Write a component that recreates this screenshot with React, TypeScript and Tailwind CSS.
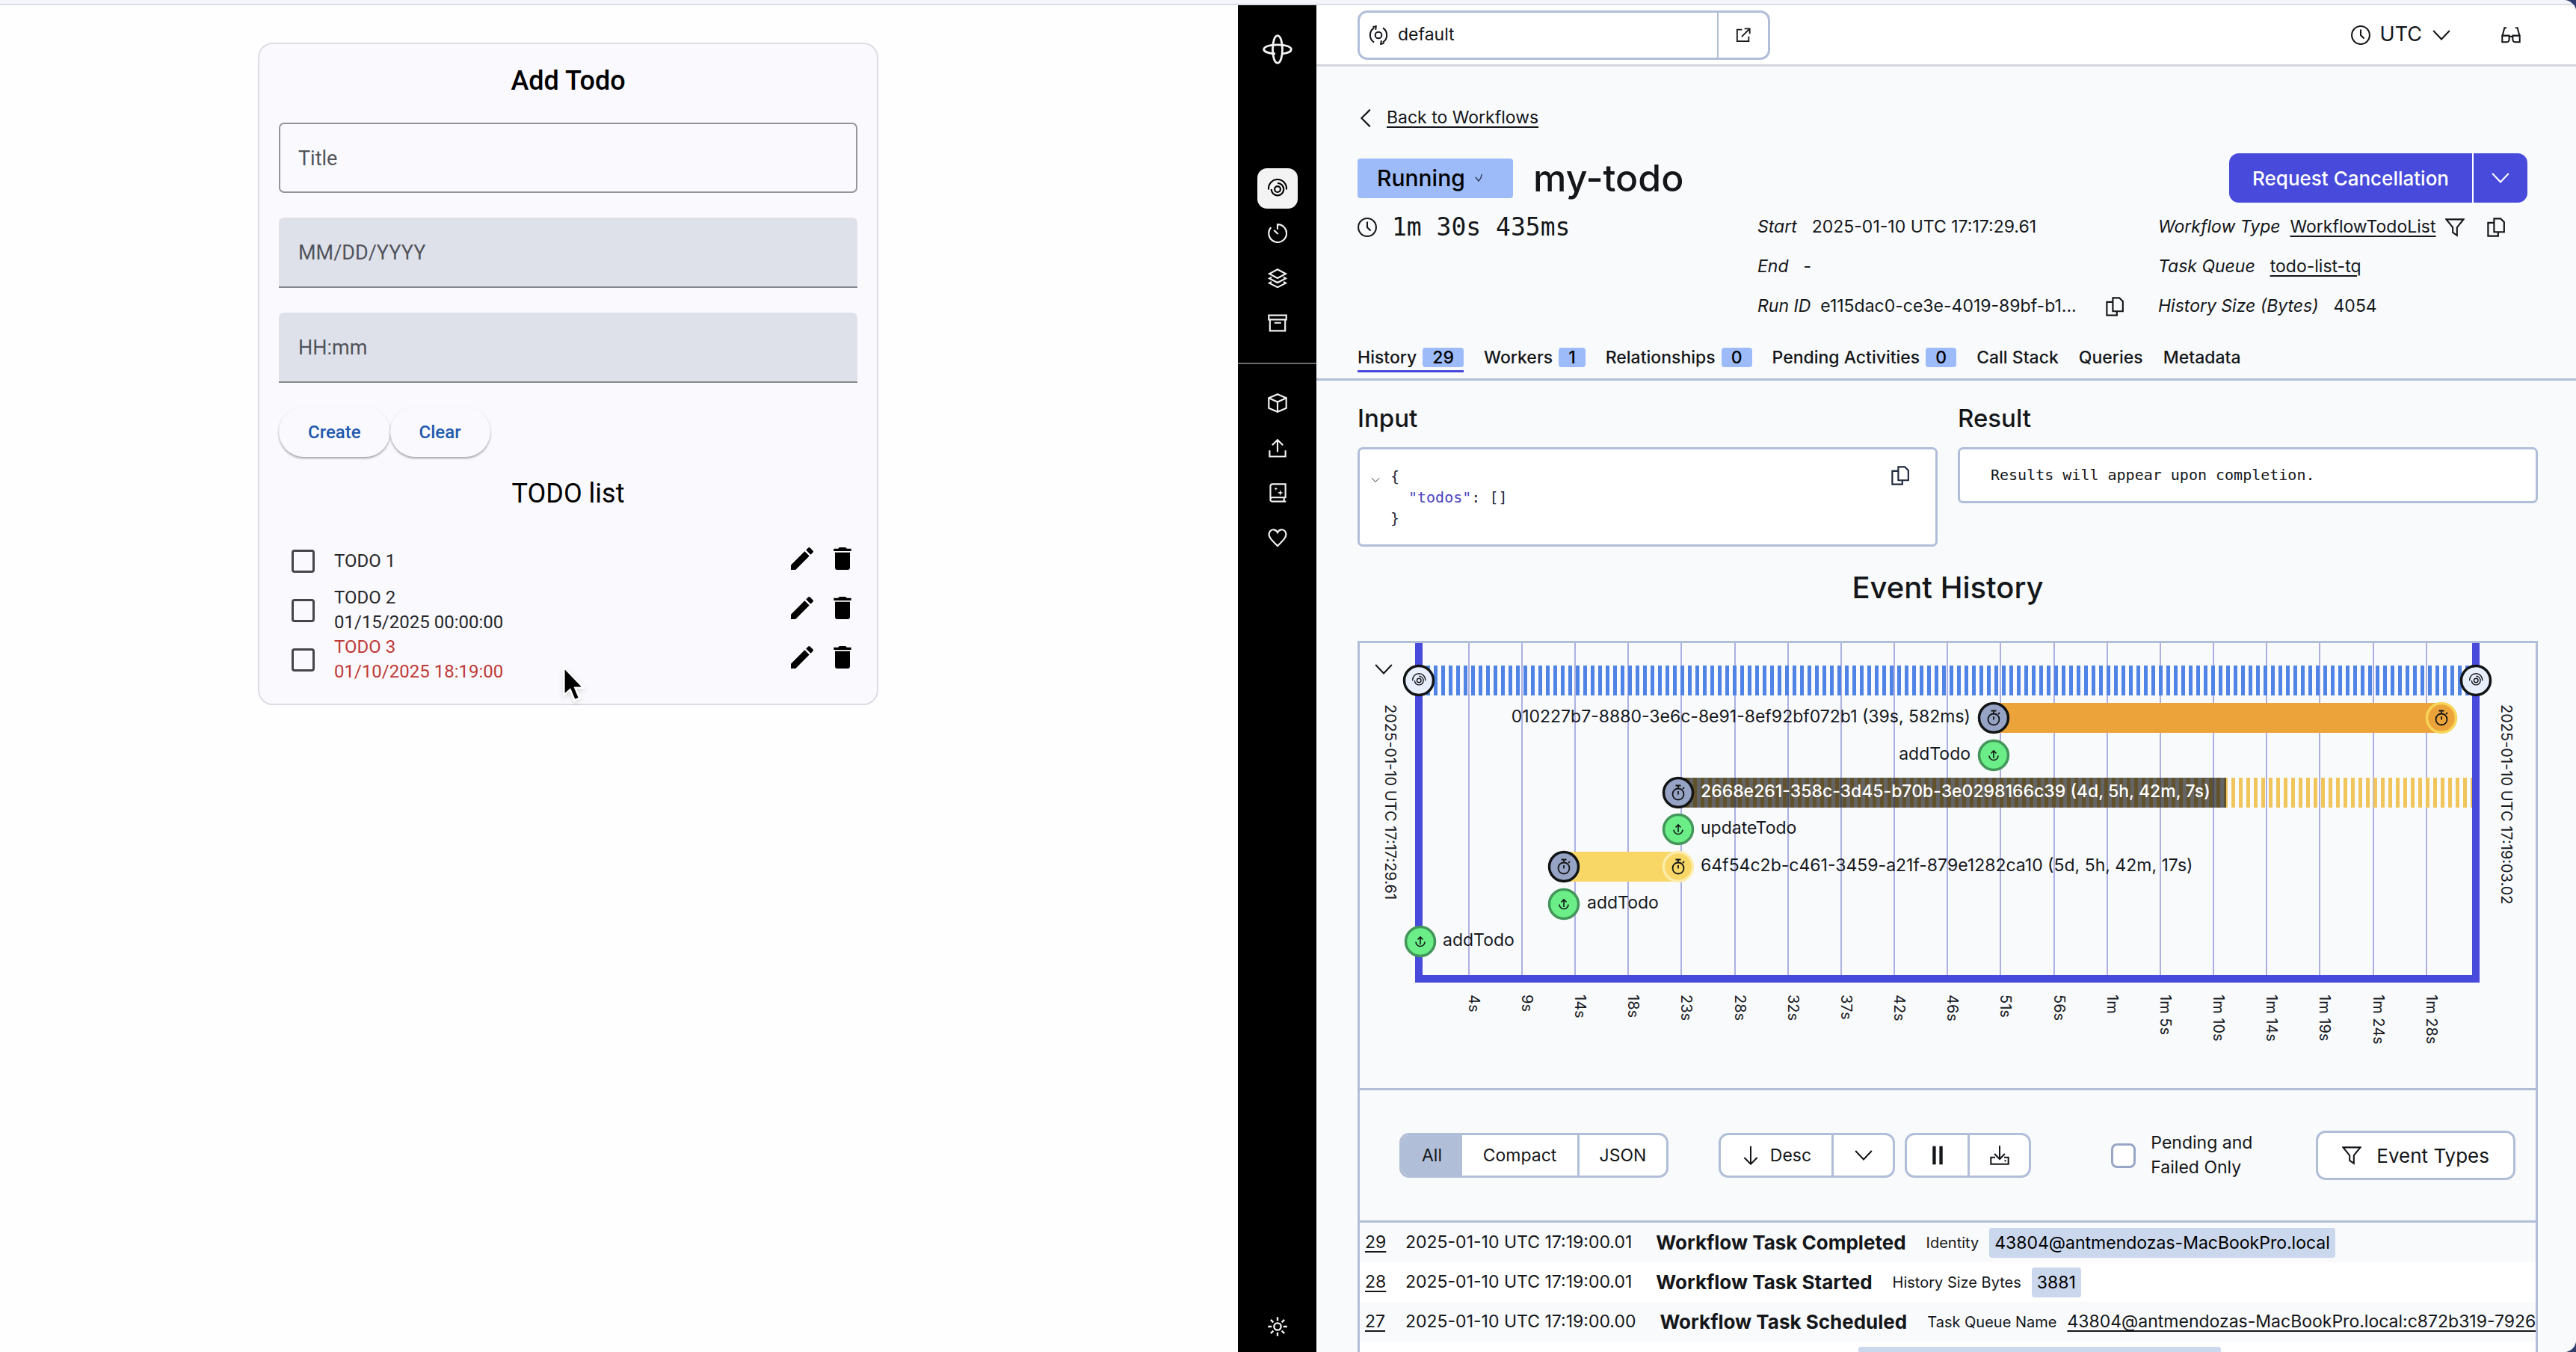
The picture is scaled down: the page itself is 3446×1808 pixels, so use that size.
import React from "react";

type IconProps = { className?: string };

function Icon({ className = "size-[26px]", children, sw = 1.7 }: IconProps & { children: React.ReactNode; sw?: number }) {
  return (
    <svg viewBox="0 0 24 24" fill="none" stroke="currentColor" strokeWidth={sw} className={`shrink-0 ${className}`} aria-hidden="true">
      {children}
    </svg>
  );
}

function SpiralShape() {
  return (
    <>
      <circle cx="12" cy="13" r="3.6" />
      <path d="M4.4 13A7.6 7.6 0 1 0 12 5.4" />
      <path d="M.9 13.4V12A11.1 11.1 0 0 1 23.1 12v1.4" />
    </>
  );
}

const WorkflowIcon = (p: IconProps) => (
  <Icon {...p} sw={2}>
    <SpiralShape />
  </Icon>
);
const ScheduleIcon = (p: IconProps) => (
  <Icon {...p} sw={2}>
    <path d="M4 4.6A11 11 0 1 0 12 1v6.2M7.5 8l5.2 5" />
  </Icon>
);
const LayersIcon = (p: IconProps) => (
  <Icon {...p} sw={2}>
    <path d="M12 1.2 22 6.6 12 12 2 6.6z" />
    <path d="M4.6 10.8 1.8 12.3 12 17.6l10.2-5.3-2.8-1.5M4.6 16.6l-2.8 1.5L12 23.2l10.2-5.1-2.8-1.5" />
  </Icon>
);
const ArchiveIcon = (p: IconProps) => (
  <Icon {...p} sw={2}>
    <path d="M1.2 2.4h21.6v5.4H1.2zM2.6 7.8v13.8h18.8V7.8M8 11.8h8.4" />
  </Icon>
);
const CubeIcon = (p: IconProps) => (
  <Icon {...p} sw={2}>
    <path d="M12 1.2 22.8 5.8v12.4L12 22.8 1.2 18.2V5.8zM1.2 5.8 12 10.6l10.8-4.8M12 10.6v12.2" />
  </Icon>
);
const UploadIcon = (p: IconProps) => (
  <Icon {...p} sw={2}>
    <path d="M12 17V2M5.4 8.6 12 2l6.6 6.6M2.2 15v7.6h19.6V15" />
  </Icon>
);
const BookIcon = (p: IconProps) => (
  <Icon {...p} sw={2}>
    <path d="M3.2 20V3.6A2.6 2.6 0 0 1 5.8 1.2h16v16.600H5.6a2.500 2.500 0 0 0 0 5h16.800M20 18v4.800" />
    <path d="M15.400 8.400l.9 2.700 2.700.9-2.700.9-.9 2.700-.9-2.700-2.700-.9 2.700-.9zM10 4.800l.6 1.700 1.700.6-1.700.6-.6 1.700-.6-1.700-1.700-.6 1.700-.6z" fill="currentColor" stroke="none" />
  </Icon>
);
const HeartIcon = (p: IconProps) => (
  <Icon {...p} sw={2}>
    <path d="M12 5.600C10 1.600 5 1 2.800 4c-2.400 3.300-1.400 6.400.8 9.200 2.100 2.800 5.400 6 8.400 9 3-3 6.300-6.200 8.400-9 2.200-2.800 3.200-5.900.8-9.200C19 1 14 1.600 12 5.600z" />
  </Icon>
);
const SunIcon = (p: IconProps) => (
  <Icon {...p} sw={2.2}>
    <circle cx="12" cy="12" r="4.300" />
    <path d="M12 .2v4.600M12 19.200v4.600M.2 12h4.600M19.200 12h4.600M3.600 3.600l3.200 3.200M17.200 17.200l3.200 3.200M3.600 20.400l3.200-3.200M17.200 6.800l3.200-3.200" />
  </Icon>
);
const LogoIcon = () => (
  <Icon className="size-10" sw={1.700}>
    <path d="M12 1c2.400 0 3.900 5.200 3.900 11s-1.500 11-3.900 11-3.900-5.200-3.900-11S9.600 1 12 1z" />
    <path d="M10.200 15.500C4.800 15.200 1 13.800 1 12s3.800-3.700 11-3.700S23 10.200 23 12s-3.200 3.100-7.200 3.500" />
  </Icon>
);
const ChevronDown = ({ className = "size-[26px]" }: IconProps) => (
  <Icon className={className} sw={1.900}>
    <path d="M2 6.500 12 17 22 6.500" />
  </Icon>
);
const ChevronLeft = () => (
  <Icon className="size-[26px]" sw={2}>
    <path d="M15.500 1.500 5 12l10.500 10.500" />
  </Icon>
);
const ClockIcon = () => (
  <Icon sw={1.900}>
    <circle cx="12" cy="12" r="11" />
    <path d="M12 5v7l4.200 4.200" />
  </Icon>
);
const GlassesIcon = () => (
  <Icon sw={1.900}>
    <path d="M6.500 3H4L1.400 13M17.500 3H20l2.600 10M1.200 12.600h8.600v5a3 3 0 0 1-3 3H1.200zM22.800 12.600h-8.600v5a3 3 0 0 0 3 3h5.600zM9.800 14.500c1.200-1 3.200-1 4.400 0" />
  </Icon>
);
const CopyIcon = () => (
  <Icon sw={2}>
    <path d="M9.600 1.200h8L22 5.600v12.200H9.600zM9.600 6.400H2.200v16.400h12.400v-5" />
  </Icon>
);
const FilterIcon = () => (
  <Icon sw={1.900}>
    <path d="M1.400 2.200h21.200L14.600 12v10l-5.200-3.600V12z" />
  </Icon>
);
const ArrowDownIcon = () => (
  <Icon sw={1.900}>
    <path d="M12 .8v21.600M4 14.800l8 8 8-8" />
  </Icon>
);
const PauseIcon = () => (
  <Icon sw={4}>
    <path d="M7.800.6v22.800M16.200.6v22.800" />
  </Icon>
);
const DownloadIcon = () => (
  <Icon sw={1.900}>
    <path d="M12 0v16.500M5.600 10.200l6.400 6.400 6.400-6.400M6.500 14.500H1.200v8.300h21.600v-8.300h-5.300M18 18.700h2" />
  </Icon>
);
const ExternalIcon = () => (
  <Icon className="size-5" sw={2.200}>
    <path d="M10 3.200H2.200v18.600h18.600V14M14 1.600h8.400V10M22 2 9.500 14.500" />
  </Icon>
);
const NamespaceIcon = () => (
  <Icon sw={1.900}>
    <circle cx="12" cy="12" r="4" />
    <path d="M6.500 20.800A10.500 10.500 0 0 1 6.500 3.200M17.500 3.200a10.500 10.500 0 0 1 0 17.600M5 2l4-1-.500 4.500M19 22l-4 1 .500-4.500" />
  </Icon>
);

/* ---------- Todo application ---------- */

const todos = [
  { title: "TODO 1", due: "", late: false },
  { title: "TODO 2", due: "01/15/2025 00:00:00", late: false },
  { title: "TODO 3", due: "01/10/2025 18:19:00", late: true },
];

function TodoApp() {
  return (
    <section className="relative min-w-0 bg-[#fefeff] pl-[345px] pr-8 pt-[50px] font-['Roboto',sans-serif]">
      <div className="w-full max-w-[830px] rounded-[20px] border-2 border-[#dcdde5] bg-[#faf9fd] px-[26px] pb-[26px]">
        <h1 className="mt-[26px] text-center text-[36px] leading-[46px] font-medium text-black">Add Todo</h1>
        <form className="mt-[33px]">
          <input
            aria-label="Title"
            placeholder="Title"
            className="block h-[94px] w-full rounded-[7px] border-2 border-[#93959c] bg-transparent px-6 pt-[2px] text-[27px] text-[#44474e] outline-none placeholder:text-[#50535a]"
          />
          <input
            aria-label="Date"
            placeholder="MM/DD/YYYY"
            className="mt-[33px] block h-[94px] w-full rounded-t-[7px] border-b-2 border-[#85888f] bg-[#dfe1ea] px-[26px] pt-[2px] text-[27px] text-[#44474e] outline-none placeholder:text-[#50535a]"
          />
          <input
            aria-label="Time"
            placeholder="HH:mm"
            className="mt-[33px] block h-[94px] w-full rounded-t-[7px] border-b-2 border-[#85888f] bg-[#dfe1ea] px-[26px] pt-[2px] text-[27px] text-[#44474e] outline-none placeholder:text-[#50535a]"
          />
          <div className="mt-[32px] flex">
            <button type="button" className="h-[67px] rounded-full bg-[#faf9fd] px-[39px] text-[24px] font-medium text-[#2059ad] shadow-[0_2px_3px_rgba(0,0,0,0.35)]">
              Create
            </button>
            <button type="button" className="h-[67px] rounded-full bg-[#faf9fd] px-[39px] text-[24px] font-medium text-[#2059ad] shadow-[0_2px_3px_rgba(0,0,0,0.35)]">
              Clear
            </button>
          </div>
        </form>
        <h2 className="mt-[26px] text-center text-[36px] leading-[46px] text-black">TODO list</h2>
        <ul className="mt-[34px]">
          {todos.map((t, i) => (
            <li key={t.title} className="flex h-[66px] items-center text-[24px] leading-[33px]">
              <input
                id={`todo-${i}`}
                type="checkbox"
                className="ml-[17px] size-[31px] shrink-0 appearance-none rounded-[4px] border-[3px] border-[#45464c]"
              />
              <label htmlFor={`todo-${i}`} className={t.late ? "ml-[26px] text-[#bf3a36]" : "ml-[26px] text-[#26272b]"}>
                <span className="block">{t.title}</span>
                {t.due && <span className="block">{t.due}</span>}
              </label>
              <div className="mb-[6px] ml-auto flex gap-[14px]">
                <button type="button" aria-label={`Edit ${t.title}`}>
                  <svg viewBox="0 0 24 24" className="size-[40px]" fill="#000">
                    <path d="M3 17.250V21h3.750L17.810 9.940l-3.750-3.750L3 17.250zM20.710 7.040a1 1 0 0 0 0-1.410l-2.340-2.340a1 1 0 0 0-1.410 0l-1.830 1.830 3.750 3.750 1.830-1.830z" />
                  </svg>
                </button>
                <button type="button" aria-label={`Delete ${t.title}`}>
                  <svg viewBox="0 0 24 24" className="size-[40px]" fill="#000">
                    <path d="M6 19a2 2 0 0 0 2 2h8a2 2 0 0 0 2-2V7H6v12zM19 4h-3.500l-1-1h-5l-1 1H5v2h14V4z" />
                  </svg>
                </button>
              </div>
            </li>
          ))}
        </ul>
      </div>
      <svg viewBox="0 0 26 42" className="absolute left-[752px] top-[883px] h-[50px] w-[31px] drop-shadow-md" aria-hidden="true">
        <path d="M2 2v31l7-6 5 12 5.500-2.300-5-11.700H24z" fill="#000" stroke="#fff" strokeWidth="2" />
      </svg>
    </section>
  );
}

/* ---------- Workflow console ---------- */

function SideNav() {
  const link = "flex size-[54px] items-center justify-center rounded-[13px]";
  return (
    <nav className="flex w-[105px] shrink-0 flex-col items-center bg-black text-[#f2f2f2]">
      <a href="#home" aria-label="Home" className="mt-[39px]">
        <LogoIcon />
      </a>
      <div className="mt-[139px] flex flex-col items-center gap-[6px]">
        <a href="#workflows" aria-label="Workflows" className={`${link} bg-[#f3f3f3] text-black`}>
          <WorkflowIcon />
        </a>
        <a href="#schedules" aria-label="Schedules" className={link}><ScheduleIcon /></a>
        <a href="#batch" aria-label="Batch" className={link}><LayersIcon /></a>
        <a href="#archive" aria-label="Archive" className={link}><ArchiveIcon /></a>
      </div>
      <hr className="mt-[26px] w-full border-t-2 border-[#6b6b6b]" />
      <div className="mt-[25px] flex flex-col items-center gap-[6px]">
        <a href="#namespaces" aria-label="Namespaces" className={link}><CubeIcon /></a>
        <a href="#import" aria-label="Import" className={link}><UploadIcon /></a>
        <a href="#docs" aria-label="Docs" className={link}><BookIcon /></a>
        <a href="#feedback" aria-label="Feedback" className={link}><HeartIcon /></a>
      </div>
      <button type="button" aria-label="Theme" className="mt-auto mb-[21px]">
        <SunIcon />
      </button>
    </nav>
  );
}

function TopBar() {
  return (
    <header className="flex h-[82px] items-center justify-between border-b-[3px] border-[#d6d8dd] bg-white pr-[74px] pl-[55px]">
      <div className="flex h-[66px] w-[552px] overflow-hidden rounded-[13px] border-[3px] border-[#b1bed8] bg-white">
        <div className="flex min-w-0 flex-1 items-center gap-[13px] pl-3">
          <NamespaceIcon />
          <input aria-label="Namespace" defaultValue="default" className="min-w-0 flex-1 text-[23px] outline-none" />
        </div>
        <button type="button" aria-label="Open namespace" className="flex w-[68px] items-center justify-center border-l-2 border-[#b1bed8]">
          <ExternalIcon />
        </button>
      </div>
      <div className="flex items-center">
        <button type="button" className="flex items-center gap-[13px] text-[27px]">
          <ClockIcon />
          UTC
          <ChevronDown />
        </button>
        <button type="button" aria-label="Labs" className="ml-[67px]">
          <GlassesIcon />
        </button>
      </div>
    </header>
  );
}

const badge = "rounded-[4px] bg-[#9dbbf8]";

function Summary() {
  return (
    <div className="pr-[65px] pl-[55px]">
      <a href="#back" className="mt-[52px] flex h-[33px] w-fit items-center gap-[13px] text-[23px]">
        <ChevronLeft />
        <span className="underline decoration-2 underline-offset-4">Back to Workflows</span>
      </a>
      <div className="mt-[31px] flex items-center">
        <div className={`${badge} flex h-[53px] w-[208px] items-center gap-[13px] pl-[26px] text-[30px] font-medium text-black`}>
          Running
          <svg viewBox="0 0 12 14" className="h-3 w-[10px]" fill="none" stroke="#27364f" strokeWidth="1.600" aria-hidden="true">
            <path d="M1 5.500 6 12 9.500 7 11 1" />
          </svg>
        </div>
        <h1 className="ml-[27px] text-[50px] leading-[66px] font-medium">my-todo</h1>
        <div className="ml-auto flex h-[66px] overflow-hidden rounded-[13px] bg-[#474adb] text-white">
          <button type="button" className="px-[31px] text-[26px] font-medium">Request Cancellation</button>
          <button type="button" aria-label="More actions" className="flex w-[74px] items-center justify-center border-l-2 border-white">
            <ChevronDown />
          </button>
        </div>
      </div>
      <div className="mt-[6px] -mr-[14px] grid grid-cols-[535fr_536fr_508fr] text-[23px] leading-[53px]">
        <div className="flex h-[53px] items-center gap-[20px] font-['DejaVu_Sans_Mono',monospace] text-[33px]">
          <ClockIcon />
          1m 30s 435ms
        </div>
        <dl className="min-w-0">
          <div className="flex gap-[20px]"><dt className="italic">Start</dt><dd>2025-01-10 UTC 17:17:29.61</dd></div>
          <div className="flex gap-[20px]"><dt className="italic">End</dt><dd>-</dd></div>
          <div className="flex items-center gap-[13px]">
            <dt className="italic">Run ID</dt>
            <dd className="w-[352px] whitespace-nowrap">e115dac0-ce3e-4019-89bf-b1...</dd>
            <button type="button" aria-label="Copy run ID" className="ml-4"><CopyIcon /></button>
          </div>
        </dl>
        <dl className="min-w-0">
          <div className="flex items-center gap-[13px]">
            <dt className="italic">Workflow Type</dt>
            <dd><a href="#type" className="underline decoration-2 underline-offset-4">WorkflowTodoList</a></dd>
            <button type="button" aria-label="Filter by type"><FilterIcon /></button>
            <button type="button" aria-label="Copy type" className="ml-4"><CopyIcon /></button>
          </div>
          <div className="flex gap-[20px]">
            <dt className="italic">Task Queue</dt>
            <dd><a href="#queue" className="underline decoration-2 underline-offset-4">todo-list-tq</a></dd>
          </div>
          <div className="flex gap-[20px]"><dt className="italic">History Size (Bytes)</dt><dd>4054</dd></div>
        </dl>
      </div>
    </div>
  );
}

const tabs = [
  { label: "History", count: "29", active: true },
  { label: "Workers", count: "1" },
  { label: "Relationships", count: "0" },
  { label: "Pending Activities", count: "0" },
  { label: "Call Stack" },
  { label: "Queries" },
  { label: "Metadata" },
];

function Tabs() {
  return (
    <div role="tablist" className="mt-[29px] flex gap-[27px] border-b-[3px] border-[#b1bed8] pb-[8px] pl-[55px]">
      {tabs.map((t) => (
        <button
          key={t.label}
          type="button"
          role="tab"
          aria-selected={!!t.active}
          className={`flex h-[33px] items-start gap-[8px] border-b-[3px] text-[23px] leading-[26px] font-medium ${t.active ? "border-[#474adb]" : "border-transparent"}`}
        >
          <span>{t.label}</span>
          {t.count && <span className={`${badge} px-[13px] text-black`}>{t.count}</span>}
        </button>
      ))}
    </div>
  );
}

function Payloads() {
  return (
    <div className="mt-[30px] grid grid-cols-2 gap-[27px]">
      <section>
        <h2 className="text-[33px] leading-10 font-medium">Input</h2>
        <div className="mt-[19px] flex h-[133px] justify-between rounded-[7px] border-[3px] border-[#b1bed8] bg-white py-[22px] pr-[34px] pl-[15px] font-['DejaVu_Sans_Mono',monospace] text-[20px] leading-[28px] text-[#1e293b]">
          <div className="flex gap-[14px]">
            <ChevronDown className="mt-[13px] size-[12px]" />
            <div>
              <div>{"{"}</div>
              <div className="pl-6">
                <span className="text-[#4a43c0]">"todos"</span>: []
              </div>
              <div>{"}"}</div>
            </div>
          </div>
          <button type="button" aria-label="Copy input" className="self-start"><CopyIcon /></button>
        </div>
      </section>
      <section>
        <h2 className="text-[33px] leading-10 font-medium">Result</h2>
        <div className="mt-[19px] rounded-[7px] border-[3px] border-[#b1bed8] bg-white px-[41px] py-[20px] font-['DejaVu_Sans_Mono',monospace] text-[20px] leading-[29px]">
          Results will appear upon completion.
        </div>
      </section>
    </div>
  );
}

const ticks = ["4s", "9s", "14s", "18s", "23s", "28s", "32s", "37s", "42s", "46s", "51s", "56s", "1m", "1m 5s", "1m 10s", "1m 14s", "1m 19s", "1m 24s", "1m 28s"];

const rowY = (row: number) => 50 + row * 50 - Math.round(row / 7);

function Node({ x, row, kind }: { x: number; row: number; kind: "workflow" | "timer" | "fired" | "firedAmber" | "update" }) {
  const fill = { workflow: "#e8eefc", timer: "#96a3c5", fired: "#f8d766", firedAmber: "#eca43a", update: "#6bee87" }[kind];
  const stroke = { workflow: "#121416", timer: "#121416", fired: "#fdecaa", firedAmber: "#f8d558", update: "#43965a" }[kind];
  return (
    <g transform={`translate(${x} ${rowY(row)})`} fill="none" stroke="#121416" strokeWidth="1.800">
      <circle r="19.500" fill={fill} stroke={stroke} strokeWidth="3.500" />
      {kind === "workflow" && (
        <g transform="translate(-9 -10) scale(0.77)">
          <SpiralShape />
        </g>
      )}
      {(kind === "timer" || kind === "fired" || kind === "firedAmber") && (
        <path d="M0-6V-9M-3.500-9.500h7M0-2v4.500M6-5l2-2M7.500 2a7.500 7.500 0 1 1-15 0 7.500 7.500 0 0 1 15 0z" />
      )}
      {kind === "update" && <path d="M0 4V-5.500M-3.500-2.500l3.500-3.500 3.500 3.500M-6 .500a6 6 0 0 0 12 0" strokeWidth="1.600" />}
    </g>
  );
}

function Timeline() {
  const left = 79;
  const right = 1493;
  const gridX = (i: number) => Math.round(74.6 + 71.17 * i);
  return (
    <div className="relative">
      <svg viewBox="0 0 1573 595" className="block w-full font-['Inter',sans-serif]" fill="#16181c" fontSize="23" role="img" aria-label="Event timeline">
        {ticks.map((t, i) => (
          <g key={t}>
            <line x1={gridX(i + 1)} x2={gridX(i + 1)} y1="0" y2="444" stroke="#adb0e0" strokeWidth="2" />
            <text transform={`translate(${gridX(i + 1)} 470) rotate(90)`} fontSize="20">
              {t}
            </text>
          </g>
        ))}
        <path d="M79 0V449H1493V0" fill="none" stroke="#474adb" strokeWidth="10" />
        <line x1={left} x2={right} y1={rowY(0)} y2={rowY(0)} stroke="#5083e6" strokeWidth="40" strokeDasharray="5 5" />
        <Node x={left} row={0} kind="workflow" />
        <Node x={right} row={0} kind="workflow" />

        <text x="817" y="106" textAnchor="end">010227b7-8880-3e6c-8e91-8ef92bf072b1 (39s, 582ms)</text>
        <line x1="848" x2="1447" y1={rowY(1)} y2={rowY(1)} stroke="#eca43a" strokeWidth="40" />
        <Node x={848} row={1} kind="timer" />
        <Node x={1447} row={1} kind="firedAmber" />

        <text x="817" y="156" textAnchor="end">addTodo</text>
        <Node x={848} row={2} kind="update" />

        <line x1="426" x2="1488" y1={rowY(3)} y2={rowY(3)} stroke="#f0c55c" strokeWidth="40" strokeDasharray="5 5" />
        <rect x="426" y={rowY(3) - 20} width="733" height="40" fill="#141414" fillOpacity="0.650" />
        <text x="456" y="206" fill="#fff" fontWeight="500">2668e261-358c-3d45-b70b-3e0298166c39 (4d, 5h, 42m, 7s)</text>
        <Node x={426} row={3} kind="timer" />

        <text x="456" y="255">updateTodo</text>
        <Node x={426} row={4} kind="update" />

        <line x1="273" x2="426" y1={rowY(5)} y2={rowY(5)} stroke="#f8d766" strokeWidth="40" />
        <text x="456" y="305">64f54c2b-c461-3459-a21f-879e1282ca10 (5d, 5h, 42m, 17s)</text>
        <Node x={273} row={5} kind="timer" />
        <Node x={426} row={5} kind="fired" />

        <text x="304" y="355">addTodo</text>
        <Node x={273} row={6} kind="update" />

        <text x="111" y="405">addTodo</text>
        <Node x={81} row={7} kind="update" />

        <text transform="translate(34 82) rotate(90)" fontSize="20">2025-01-10 UTC 17:17:29.61</text>
        <text transform="translate(1527 82) rotate(90)" fontSize="20">2025-01-10 UTC 17:19:03.02</text>
      </svg>
      <button type="button" aria-label="Collapse timeline" className="absolute top-[22px] left-[19px]">
        <ChevronDown />
      </button>
    </div>
  );
}

function Toolbar() {
  const group = "flex h-[60px] overflow-hidden rounded-[13px] border-[3px] border-[#b1bed8] bg-white";
  return (
    <div className="flex h-[180px] items-center border-y-[3px] border-[#b1bed8] pr-[27px] pl-[53px] text-[23px]">
      <div className={group}>
        <button type="button" className="w-[81px] bg-[#b1bed8]">All</button>
        <button type="button" className="w-[154px]">Compact</button>
        <button type="button" className="w-[119px] border-l-[3px] border-[#b1bed8]">JSON</button>
      </div>
      <div className={`${group} ml-[67px]`}>
        <button type="button" className="flex w-[148px] items-center justify-center gap-[13px]">
          <ArrowDownIcon />
          Desc
        </button>
        <button type="button" aria-label="Sort options" className="flex w-[82px] items-center justify-center border-l-[3px] border-[#b1bed8]">
          <ChevronDown />
        </button>
      </div>
      <div className={`${group} ml-[13px]`}>
        <button type="button" aria-label="Pause" className="flex w-[81px] items-center justify-center"><PauseIcon /></button>
        <button type="button" aria-label="Download" className="flex w-[82px] items-center justify-center border-l-[3px] border-[#b1bed8]">
          <DownloadIcon />
        </button>
      </div>
      <label className="ml-auto flex w-[220px] items-center gap-[20px] leading-[33px]">
        <input type="checkbox" className="size-[33px] shrink-0 appearance-none rounded-[8px] border-[3px] border-[#98a6c6] bg-white" />
        Pending and Failed Only
      </label>
      <button type="button" className="ml-[54px] flex h-[66px] items-center gap-[20px] rounded-[13px] border-[3px] border-[#b1bed8] bg-white px-8 text-[26px]">
        <FilterIcon />
        Event Types
      </button>
    </div>
  );
}

const events = [
  { id: 29, time: "2025-01-10 UTC 17:19:00.01", name: "Workflow Task Completed", field: "Identity", value: "43804@antmendozas-MacBookPro.local", link: false },
  { id: 28, time: "2025-01-10 UTC 17:19:00.01", name: "Workflow Task Started", field: "History Size Bytes", value: "3881", link: false },
  { id: 27, time: "2025-01-10 UTC 17:19:00.00", name: "Workflow Task Scheduled", field: "Task Queue Name", value: "43804@antmendozas-MacBookPro.local:c872b319-7926", link: true },
];

function EventTable() {
  return (
    <table className="w-full table-fixed border-collapse">
      <tbody>
        {events.map((e) => (
          <tr key={e.id} className="h-[53px] even:bg-white">
            <td className="w-[61px] pl-[7px] text-[23px]">
              <a href="#event" className="underline decoration-2 underline-offset-4">{e.id}</a>
            </td>
            <td className="overflow-hidden p-0">
              <div className="flex items-center whitespace-nowrap">
                <span className="text-[23px]">{e.time}</span>
                <span className="ml-8 text-[26px] font-bold">{e.name}</span>
                <span className="ml-[27px] text-[20px]">{e.field}</span>
                {e.link ? (
                  <a href="#queue" className="ml-[14px] text-[23px] underline decoration-2 underline-offset-4">{e.value}</a>
                ) : (
                  <span className="ml-[14px] rounded-[4px] bg-[#cad7ed] px-[7px] text-[23px] leading-10 text-black">{e.value}</span>
                )}
              </div>
            </td>
          </tr>
        ))}
        <tr className="bg-white">
          <td colSpan={2} className="pt-[7px] pl-[667px]">
            <div className="h-10 w-[485px] rounded-[4px] bg-[#cad7ed]" />
          </td>
        </tr>
      </tbody>
    </table>
  );
}

function Console() {
  return (
    <section className="flex min-w-0 font-['Inter',sans-serif] text-[#141619]">
      <SideNav />
      <main className="min-w-0 flex-1 bg-[#f8fafc]">
        <TopBar />
        <Summary />
        <Tabs />
        <div className="pr-[51px] pl-[55px]">
          <Payloads />
          <h2 className="mt-[31px] text-center text-[40px] leading-[48px] font-medium">Event History</h2>
          <div className="mt-[47px] border-x-[3px] border-t-[3px] border-[#b1bed8]">
            <Timeline />
            <Toolbar />
            <EventTable />
          </div>
        </div>
      </main>
    </section>
  );
}

export default function App() {
  return (
    <div className="h-screen overflow-hidden bg-[#303c6c]">
      <div className="flex h-full flex-col overflow-hidden rounded-r-[16px] bg-[#f5f6fc]">
        <div className="h-[7px] shrink-0 border-b-2 border-[#dcdde6]" />
        <div className="grid min-h-0 flex-1 grid-cols-[1656fr_1790fr] grid-rows-[100%] overflow-hidden">
          <TodoApp />
          <Console />
        </div>
      </div>
    </div>
  );
}
